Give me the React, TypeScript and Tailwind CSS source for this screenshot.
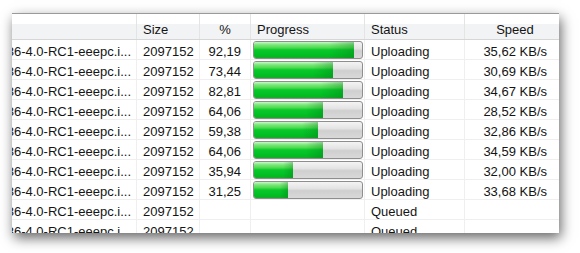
const FONT = "font-['Liberation_Sans',Arial,sans-serif]"

type Row = {
  size: string
  pct?: number
  pctLabel?: string
  status: string
  speed?: string
}

const ROWS: Row[] = [
  { size: '2097152', pct: 92.19, pctLabel: '92,19', status: 'Uploading', speed: '35,62 KB/s' },
  { size: '2097152', pct: 73.44, pctLabel: '73,44', status: 'Uploading', speed: '30,69 KB/s' },
  { size: '2097152', pct: 82.81, pctLabel: '82,81', status: 'Uploading', speed: '34,67 KB/s' },
  { size: '2097152', pct: 64.06, pctLabel: '64,06', status: 'Uploading', speed: '28,52 KB/s' },
  { size: '2097152', pct: 59.38, pctLabel: '59,38', status: 'Uploading', speed: '32,86 KB/s' },
  { size: '2097152', pct: 64.06, pctLabel: '64,06', status: 'Uploading', speed: '34,59 KB/s' },
  { size: '2097152', pct: 35.94, pctLabel: '35,94', status: 'Uploading', speed: '32,00 KB/s' },
  { size: '2097152', pct: 31.25, pctLabel: '31,25', status: 'Uploading', speed: '33,68 KB/s' },
  { size: '2097152', status: 'Queued' },
  { size: '2097152', status: 'Queued' },
]

function ProgressBar({ pct }: { pct: number }) {
  return (
    <div className="h-[18px] w-full rounded-[3px] border border-[#8e8e8e] bg-[linear-gradient(to_bottom,#f4f4f4_0%,#e4e4e4_40%,#cfcfcf_55%,#d9d9d9_100%)] overflow-hidden">
      <div
        className="h-full bg-[linear-gradient(to_right,rgba(0,120,0,0)_75%,rgba(0,110,20,0.3)_100%),linear-gradient(to_bottom,#c6f6c6_0%,#7ae67a_18%,#4fdc50_35%,#08c82c_50%,#00bd22_85%,#1aa82a_100%)]"
        style={{ width: `${pct}%` }}
      />
    </div>
  )
}

export default function App() {
  return (
    <div className={`w-[580px] h-[253px] bg-white overflow-hidden pt-[13px] pl-[12px] text-[13px] text-[#141414] ${FONT}`}>
      <div className="w-[547px] h-[220px] overflow-hidden bg-white border-t border-[#9a9a9a] shadow-[2px_5px_12px_rgba(0,0,0,0.6)]">
        {/* header */}
        <div className="flex h-[26px] border-b border-[#d6d6d6] bg-[linear-gradient(to_bottom,#ffffff_0%,#ffffff_38%,#f2f3f5_40%,#f2f3f5_100%)] leading-[15px]">
          <div className="w-[125px] border-r border-[#e4e4e4]" />
          <div className="w-[63px] border-r border-[#e4e4e4] pl-[6px] pt-[8px]">Size</div>
          <div className="w-[51px] border-r border-[#e4e4e4] pt-[8px] text-center">%</div>
          <div className="w-[114px] border-r border-[#e4e4e4] pl-[6px] pt-[8px]">Progress</div>
          <div className="w-[100px] border-r border-[#e4e4e4] pl-[6px] pt-[8px]">Status</div>
          <div className="w-[94px] pt-[8px] text-center pl-[6px]">Speed</div>
        </div>

        {/* rows */}
        {ROWS.map((r, i) => (
          <div key={i} className="flex h-[20px] border-b border-[#efefef] leading-[15px]">
            <div className="w-[125px] border-r border-[#efefef] overflow-hidden flex justify-end pr-[5px] pt-[4px] whitespace-nowrap">
              <span>i386-4.0-RC1-eeepc.i...</span>
            </div>
            <div className="w-[63px] border-r border-[#efefef] pl-[6px] pt-[4px]">{r.size}</div>
            <div className="w-[51px] border-r border-[#efefef] pr-[9px] pt-[4px] text-right">{r.pctLabel}</div>
            <div className="w-[114px] border-r border-[#efefef] pl-[2px] pr-[1px] pt-[1px]">
              {r.pct !== undefined && <ProgressBar pct={r.pct} />}
            </div>
            <div className="w-[100px] border-r border-[#efefef] pl-[6px] pt-[4px]">{r.status}</div>
            <div className="w-[94px] pr-[12px] pt-[4px] text-right">{r.speed}</div>
          </div>
        ))}
      </div>
    </div>
  )
}
